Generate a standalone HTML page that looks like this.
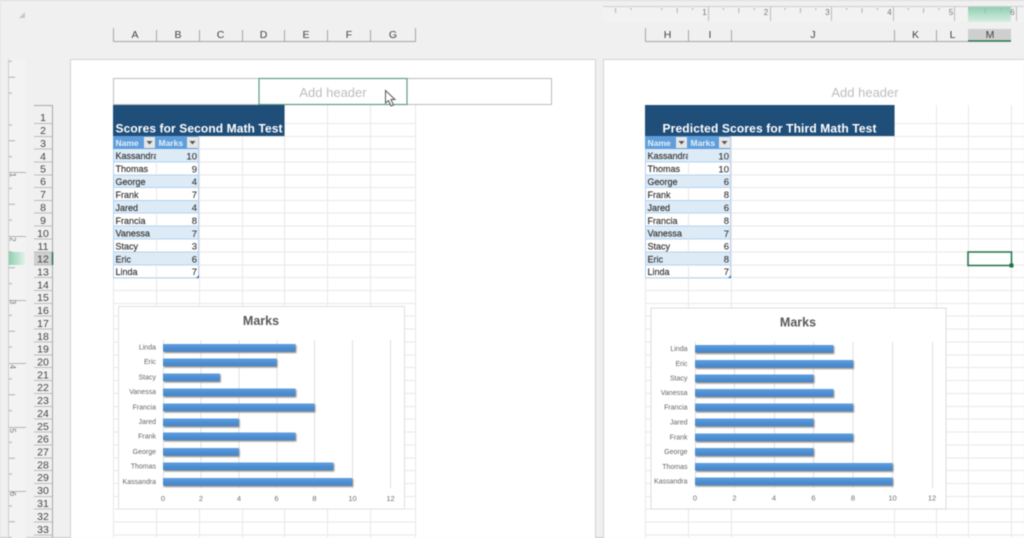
<!DOCTYPE html>
<html><head><meta charset="utf-8"><title>Page Layout</title>
<style>
html,body{margin:0;padding:0;background:#f0f0f0;width:1024px;height:538px;overflow:hidden}
svg{display:block;filter:blur(.5px)}
text{font-family:"Liberation Sans",sans-serif}
.hd{font-size:10.5px;fill:#444;text-anchor:middle}
.rn{font-size:10.5px;fill:#444;text-anchor:middle}
.rl{font-size:8px;fill:#777;text-anchor:middle}
.t{font-size:9px;fill:#2e2e2e;stroke:#2e2e2e;stroke-width:.15px}
.n{font-size:9.5px;fill:#333;text-anchor:end;stroke:#333;stroke-width:.1px}
.th{font-size:8.5px;font-weight:bold;fill:#e4f0fb}
.ti{font-size:12px;font-weight:bold;fill:#fff}
.ah{font-size:13px;fill:#bdbdbd;text-anchor:middle}
.ct{font-size:12.5px;font-weight:bold;fill:#595959;text-anchor:middle}
.ax{font-size:7.5px;fill:#6e6e6e;text-anchor:middle}
.cl{font-size:7px;fill:#666;text-anchor:end}
</style></head><body>
<svg width="1024" height="538" viewBox="0 0 1024 538" xmlns="http://www.w3.org/2000/svg">
<defs>
<linearGradient id="bar" x1="0" y1="0" x2="0" y2="1"><stop offset="0" stop-color="#629fdc"/><stop offset=".5" stop-color="#4d90d5"/><stop offset="1" stop-color="#4585ca"/></linearGradient>
<linearGradient id="gt" x1="0" y1="0" x2="0" y2="1"><stop offset="0" stop-color="#8fd0b0"/><stop offset="1" stop-color="#d8eee2"/></linearGradient>
<linearGradient id="gl" x1="0" y1="0" x2="1" y2="0"><stop offset="0" stop-color="#8fd0b0"/><stop offset="1" stop-color="#e2f2ea"/></linearGradient>
<pattern id="tr" patternUnits="userSpaceOnUse" width="61.6" height="30" x="646.4" y="0">
<path d="M15.4 8v2M30.8 8v5M46.2 8v2" stroke="#b0b0b0" stroke-width="1" fill="none"/>
</pattern>
<pattern id="lr" patternUnits="userSpaceOnUse" width="40" height="63.5" x="0" y="45.5">
<path d="M9 15.900h3M9 31.700h6M9 47.600h3" stroke="#b0b0b0" stroke-width="1" fill="none"/>
</pattern>
<filter id="sh" x="-5%" y="-50%" width="110%" height="200%"><feGaussianBlur stdDeviation=".9"/></filter>
<clipPath id="c1"><rect x="113" y="149" width="43" height="13"/></clipPath>
<clipPath id="c2"><rect x="645" y="149" width="43" height="13"/></clipPath>
</defs>
<rect width="1024" height="538" fill="#f0f0f0"/>
<path d="M0 .5H1024" stroke="#dcdcdc"/>
<path d="M.5 0V538" stroke="#e4e4e4"/>
<path d="M0 537.500H1024" stroke="#c9c9c9"/>

<!-- corner -->
<path d="M25 12v6h-6z" fill="#c8c8c8"/>

<!-- top ruler -->
<rect x="603" y="7" width="421" height="15" fill="#f2f2f2"/>
<rect x="968" y="7" width="43" height="15" fill="url(#gt)"/>
<path d="M603 6.500H1024" stroke="#cfcfcf"/>
<rect x="603" y="7" width="421" height="14" fill="url(#tr)"/>
<path d="M708.500 7v14M770.500 7v14M831.500 7v14M893.500 7v14M954.500 7v14M1016.500 7v14" stroke="#bcbcbc"/>
<text class="rl" x="704.500" y="15">1</text><text class="rl" x="766" y="15">2</text><text class="rl" x="827.500" y="15">3</text><text class="rl" x="889.500" y="15">4</text><text class="rl" x="951" y="15">5</text><text class="rl" x="1012.500" y="15">6</text>

<!-- left ruler -->
<rect x="9" y="59" width="17" height="479" fill="#f3f3f3"/>
<rect x="9" y="252" width="16" height="13" fill="url(#gl)"/>
<path d="M8.500 59V538" stroke="#cdcdcd"/>
<rect x="9" y="59" width="17" height="479" fill="url(#lr)"/>
<path d="M9 172.500h17M9 236.500h17M9 300.500h17M9 363.500h17M9 427.500h17M9 491.500h17" stroke="#b4b4b4"/>
<text class="rl" x="13" y="178" transform="rotate(90 13 175)">1</text><text class="rl" x="13" y="242.300" transform="rotate(90 13 239.300)">2</text><text class="rl" x="13" y="305" transform="rotate(90 13 302)">3</text><text class="rl" x="13" y="369.700" transform="rotate(90 13 366.700)">4</text><text class="rl" x="13" y="433.700" transform="rotate(90 13 430.700)">5</text><text class="rl" x="13" y="497" transform="rotate(90 13 494)">6</text>

<!-- column headers -->
<path d="M113.500 28v13.500H415.500V28M156.500 30v11M199.500 30v11M242.500 30v11M284.500 30v11M327.500 30v11M370.500 30v11" stroke="#a6a6a6" fill="none"/>
<text class="hd" x="135" y="38">A</text><text class="hd" x="178" y="38">B</text><text class="hd" x="220.500" y="38">C</text><text class="hd" x="263.500" y="38">D</text><text class="hd" x="306" y="38">E</text><text class="hd" x="349" y="38">F</text><text class="hd" x="393" y="38">G</text>
<rect x="968" y="29" width="43" height="12" fill="#cfcfcf"/>
<path d="M645.500 28v13.500H968M688.500 30v11M731.500 30v11M894.500 30v11M936.500 30v11" stroke="#a6a6a6" fill="none"/>
<path d="M968 41H1011" stroke="#217346" stroke-width="1.500"/>
<text class="hd" x="667.500" y="38">H</text><text class="hd" x="710" y="38">I</text><text class="hd" x="813" y="38">J</text><text class="hd" x="915.500" y="38">K</text><text class="hd" x="952.500" y="38">L</text><text class="hd" x="990" y="38">M</text>

<!-- row headers -->
<rect x="34" y="252" width="19" height="13" fill="#cfcfcf"/>
<path d="M34 105.500H52.500V538" stroke="#a8a8a8" fill="none"/>
<path d="M52.500 252V265" stroke="#217346" stroke-width="1.500"/>
<path d="M34 123.500h18M34 136.500h18M34 149h18M34 162h18M34 175h18M34 187.500h18M34 200.500h18M34 213h18M34 226h18M34 239h18M34 252h18M34 265h18M34 277.500h18M34 290.500h18M34 303.500h18M34 316h18M34 329h18M34 342h18M34 355h18M34 367.500h18M34 380.500h18M34 393.500h18M34 406.500h18M34 419h18M34 432h18M34 445h18M34 458h18M34 470.500h18M34 483.500h18M34 496.500h18M34 509h18M34 522h18M34 535h18" stroke="#bcbcbc" fill="none"/>
<text class="rn" x="43" y="121">1</text><text class="rn" x="43" y="134">2</text><text class="rn" x="43" y="147">3</text><text class="rn" x="43" y="160">4</text><text class="rn" x="43" y="172.500">5</text><text class="rn" x="43" y="185">6</text><text class="rn" x="43" y="198">7</text><text class="rn" x="43" y="211">8</text><text class="rn" x="43" y="224">9</text><text class="rn" x="43" y="237">10</text><text class="rn" x="43" y="250">11</text><text class="rn" x="43" y="262.500">12</text><text class="rn" x="43" y="275.500">13</text><text class="rn" x="43" y="288.500">14</text><text class="rn" x="43" y="301">15</text><text class="rn" x="43" y="314">16</text><text class="rn" x="43" y="327">17</text><text class="rn" x="43" y="340">18</text><text class="rn" x="43" y="352.500">19</text><text class="rn" x="43" y="365.500">20</text><text class="rn" x="43" y="378.500">21</text><text class="rn" x="43" y="391">22</text><text class="rn" x="43" y="404">23</text><text class="rn" x="43" y="417">24</text><text class="rn" x="43" y="430">25</text><text class="rn" x="43" y="442.500">26</text><text class="rn" x="43" y="455.500">27</text><text class="rn" x="43" y="468.500">28</text><text class="rn" x="43" y="481">29</text><text class="rn" x="43" y="494">30</text><text class="rn" x="43" y="507">31</text><text class="rn" x="43" y="520">32</text><text class="rn" x="43" y="533">33</text>

<!-- pages -->
<rect x="71" y="59" width="524" height="479" fill="#fff"/>
<path d="M70.500 538V59.500H595.500V538" stroke="#d2d2d2" fill="none"/>
<rect x="603" y="59" width="421" height="479" fill="#fff"/>
<path d="M603.500 538V59.500H1024" stroke="#d2d2d2" fill="none"/>

<!-- grid left -->
<path d="M113 123.500H415M113 136.500H415M113 149H415M113 162H415M113 175H415M113 187.500H415M113 200.500H415M113 213H415M113 226H415M113 239H415M113 252H415M113 265H415M113 277.500H415M113 290.500H415M113 303.500H415M113 316H415M113 329H415M113 342H415M113 355H415M113 367.500H415M113 380.500H415M113 393.500H415M113 406.500H415M113 419H415M113 432H415M113 445H415M113 458H415M113 470.500H415M113 483.500H415M113 496.500H415M113 509H415M113 522H415M113 535H415M113.500 105V538M156.500 105V538M199.500 105V538M242.500 105V538M284.500 105V538M327.500 105V538M370.500 105V538M415.500 105V538" stroke="#e8e8e8" fill="none"/>
<!-- grid right -->
<path d="M645 123.500H1024M645 136.500H1024M645 149H1024M645 162H1024M645 175H1024M645 187.500H1024M645 200.500H1024M645 213H1024M645 226H1024M645 239H1024M645 252H1024M645 265H1024M645 277.500H1024M645 290.500H1024M645 303.500H1024M645 316H1024M645 329H1024M645 342H1024M645 355H1024M645 367.500H1024M645 380.500H1024M645 393.500H1024M645 406.500H1024M645 419H1024M645 432H1024M645 445H1024M645 458H1024M645 470.500H1024M645 483.500H1024M645 496.500H1024M645 509H1024M645 522H1024M645 535H1024M645.500 105V538M688.500 105V538M731.500 105V538M894.500 105V538M936.500 105V538M968.500 105V538M1011.500 105V538" stroke="#e8e8e8" fill="none"/>

<!-- header boxes -->
<rect x="113.500" y="78.500" width="438" height="26" fill="#fff" stroke="#bdbdbd"/>
<rect x="259" y="78.500" width="148" height="26" fill="#fff" stroke="#5f9e7f" stroke-width="1.200"/>
<text class="ah" x="333" y="97">Add header</text>
<text class="ah" x="865" y="97">Add header</text>
<path d="M385.500 90.500V103L388.500 100.500L391 106L393.500 105L391 99.500H395Z" fill="#fff" stroke="#555" stroke-width="1"/>

<!-- left table -->
<rect x="113" y="105" width="171.500" height="31" fill="#1f4e79"/>
<text class="ti" x="115.500" y="132.500" textLength="167" lengthAdjust="spacing">Scores for Second Math Test</text>
<rect x="113" y="136" width="86" height="13" fill="#5f9eda"/>
<text class="th" x="115.500" y="146">Name</text><text class="th" x="158.500" y="146">Marks</text>
<rect x="144" y="137" width="11" height="11" fill="#e6e6e6"/><path d="M146.500 141h6l-3 3.500z" fill="#555"/>
<rect x="187" y="137" width="11" height="11" fill="#e6e6e6"/><path d="M189.500 141h6l-3 3.500z" fill="#555"/>
<path d="M113 149h86v13h-86zM113 175h86v12.500h-86zM113 200.500h86v12.500h-86zM113 226h86v13h-86zM113 252h86v13h-86z" fill="#ddebf7"/>
<path d="M113 162H199M113 175H199M113 187.500H199M113 200.500H199M113 213H199M113 226H199M113 239H199M113 252H199M113 265H199M113 278H199M113.500 149V278M198.500 136V278" stroke="#b4d2ee" fill="none"/>
<path d="M156.500 149V162" stroke="#ddebf7"/><path d="M156.500 162V175M156.500 187.500V200.500M156.500 213V226M156.500 239V252M156.500 265V278" stroke="#e8e8e8"/>
<g clip-path="url(#c1)"><text class="t" x="115.500" y="159">Kassandra</text></g>
<text class="t" x="115.500" y="172">Thomas</text><text class="t" x="115.500" y="185">George</text><text class="t" x="115.500" y="198">Frank</text><text class="t" x="115.500" y="211">Jared</text><text class="t" x="115.500" y="224">Francia</text><text class="t" x="115.500" y="236.500">Vanessa</text><text class="t" x="115.500" y="249.500">Stacy</text><text class="t" x="115.500" y="262.500">Eric</text><text class="t" x="115.500" y="275">Linda</text>
<text class="n" x="197" y="159.500">10</text><text class="n" x="197" y="172.500">9</text><text class="n" x="197" y="185">4</text><text class="n" x="197" y="198">7</text><text class="n" x="197" y="211">4</text><text class="n" x="197" y="224">8</text><text class="n" x="197" y="237">7</text><text class="n" x="197" y="249.500">3</text><text class="n" x="197" y="262.500">6</text><text class="n" x="197" y="275">7</text>
<path d="M199 275v3h-3z" fill="#3b6db5"/>

<!-- right table -->
<rect x="645" y="105" width="249.500" height="31" fill="#1f4e79"/>
<text class="ti" x="662.500" y="132.500" textLength="214" lengthAdjust="spacing">Predicted Scores for Third Math Test</text>
<rect x="645" y="136" width="86" height="13" fill="#5f9eda"/>
<text class="th" x="647.500" y="146">Name</text><text class="th" x="690.500" y="146">Marks</text>
<rect x="676" y="137" width="11" height="11" fill="#e6e6e6"/><path d="M678.500 141h6l-3 3.500z" fill="#555"/>
<rect x="719" y="137" width="11" height="11" fill="#e6e6e6"/><path d="M721.500 141h6l-3 3.500z" fill="#555"/>
<path d="M645 149h86v13h-86zM645 175h86v12.500h-86zM645 200.500h86v12.500h-86zM645 226h86v13h-86zM645 252h86v13h-86z" fill="#ddebf7"/>
<path d="M645 162H731M645 175H731M645 187.500H731M645 200.500H731M645 213H731M645 226H731M645 239H731M645 252H731M645 265H731M645 278H731M645.500 149V278M730.500 136V278" stroke="#b4d2ee" fill="none"/>
<path d="M688.500 149V162" stroke="#ddebf7"/><path d="M688.500 162V175M688.500 187.500V200.500M688.500 213V226M688.500 239V252M688.500 265V278" stroke="#e8e8e8"/>
<g clip-path="url(#c2)"><text class="t" x="647.500" y="159">Kassandra</text></g>
<text class="t" x="647.500" y="172">Thomas</text><text class="t" x="647.500" y="185">George</text><text class="t" x="647.500" y="198">Frank</text><text class="t" x="647.500" y="211">Jared</text><text class="t" x="647.500" y="224">Francia</text><text class="t" x="647.500" y="236.500">Vanessa</text><text class="t" x="647.500" y="249.500">Stacy</text><text class="t" x="647.500" y="262.500">Eric</text><text class="t" x="647.500" y="275">Linda</text>
<text class="n" x="729" y="159.500">10</text><text class="n" x="729" y="172.500">10</text><text class="n" x="729" y="185">6</text><text class="n" x="729" y="198">8</text><text class="n" x="729" y="211">6</text><text class="n" x="729" y="224">8</text><text class="n" x="729" y="237">7</text><text class="n" x="729" y="249.500">6</text><text class="n" x="729" y="262.500">8</text><text class="n" x="729" y="275">7</text>
<path d="M731 275v3h-3z" fill="#3b6db5"/>

<!-- selected cell -->
<rect x="968" y="252" width="43.500" height="13.500" fill="none" stroke="#217346" stroke-width="1.500"/>
<rect x="1009.500" y="263.500" width="4" height="4" fill="#217346"/>

<!-- left chart -->
<rect x="118.500" y="306.500" width="286" height="202.500" fill="#fff" stroke="#e0e0e0"/>
<text class="ct" x="261" y="325">Marks</text>
<path d="M163.500 340V488M201 340V488M239 340V488M277 340V488M314.500 340V488M352.500 340V488M390.500 340V488" stroke="#e0e0e0"/>
<g fill="#8a8a8a" filter="url(#sh)">
<rect x="164" y="345" width="132.400" height="8"/><rect x="164" y="359.500" width="113.500" height="8"/><rect x="164" y="374.500" width="56.800" height="8"/><rect x="164" y="389.500" width="132.400" height="8"/><rect x="164" y="404.500" width="151.400" height="8"/><rect x="164" y="419.500" width="75.700" height="8"/><rect x="164" y="433.500" width="132.400" height="8"/><rect x="164" y="449" width="75.700" height="8"/><rect x="164" y="463.500" width="170.300" height="8"/><rect x="164" y="479" width="189.200" height="8"/>
</g>
<g fill="url(#bar)">
<rect x="163" y="344" width="132.400" height="7.500"/><rect x="163" y="358.500" width="113.500" height="7.500"/><rect x="163" y="373.500" width="56.800" height="7.500"/><rect x="163" y="388.500" width="132.400" height="7.500"/><rect x="163" y="403.500" width="151.400" height="7.500"/><rect x="163" y="418.500" width="75.700" height="7.500"/><rect x="163" y="432.500" width="132.400" height="7.500"/><rect x="163" y="448" width="75.700" height="7.500"/><rect x="163" y="462.500" width="170.300" height="7.500"/><rect x="163" y="478" width="189.200" height="7.500"/>
</g>
<text class="cl" x="156" y="349.500">Linda</text><text class="cl" x="156" y="364">Eric</text><text class="cl" x="156" y="379.500">Stacy</text><text class="cl" x="156" y="394">Vanessa</text><text class="cl" x="156" y="409.500">Francia</text><text class="cl" x="156" y="424">Jared</text><text class="cl" x="156" y="438.500">Frank</text><text class="cl" x="156" y="454">George</text><text class="cl" x="156" y="468.500">Thomas</text><text class="cl" x="156" y="484">Kassandra</text>
<text class="ax" x="163" y="501">0</text><text class="ax" x="201" y="501">2</text><text class="ax" x="239" y="501">4</text><text class="ax" x="276.500" y="501">6</text><text class="ax" x="314.500" y="501">8</text><text class="ax" x="352.500" y="501">10</text><text class="ax" x="390.500" y="501">12</text>

<!-- right chart -->
<rect x="651" y="308" width="295" height="201" fill="#fff" stroke="#dcdcdc"/>
<text class="ct" x="798" y="326.500">Marks</text>
<path d="M695.500 342V488M734.500 342V488M774.500 342V488M813.500 342V488M853 342V488M892.500 342V488M932.500 342V488" stroke="#e0e0e0"/>
<g fill="#8a8a8a" filter="url(#sh)">
<rect x="696" y="346" width="138.300" height="8"/><rect x="696" y="361" width="158" height="8"/><rect x="696" y="375.500" width="118.500" height="8"/><rect x="696" y="390" width="138.300" height="8"/><rect x="696" y="404.500" width="158" height="8"/><rect x="696" y="419.500" width="118.500" height="8"/><rect x="696" y="434.500" width="158" height="8"/><rect x="696" y="449" width="118.500" height="8"/><rect x="696" y="464" width="197.500" height="8"/><rect x="696" y="478.500" width="197.500" height="8"/>
</g>
<g fill="url(#bar)">
<rect x="695" y="345" width="138.300" height="7.500"/><rect x="695" y="360" width="158" height="7.500"/><rect x="695" y="374.500" width="118.500" height="7.500"/><rect x="695" y="389" width="138.300" height="7.500"/><rect x="695" y="403.500" width="158" height="7.500"/><rect x="695" y="418.500" width="118.500" height="7.500"/><rect x="695" y="433.500" width="158" height="7.500"/><rect x="695" y="448" width="118.500" height="7.500"/><rect x="695" y="463" width="197.500" height="7.500"/><rect x="695" y="477.500" width="197.500" height="7.500"/>
</g>
<text class="cl" x="687.500" y="351">Linda</text><text class="cl" x="687.500" y="366">Eric</text><text class="cl" x="687.500" y="380.500">Stacy</text><text class="cl" x="687.500" y="395">Vanessa</text><text class="cl" x="687.500" y="409.500">Francia</text><text class="cl" x="687.500" y="424.500">Jared</text><text class="cl" x="687.500" y="439.500">Frank</text><text class="cl" x="687.500" y="454">George</text><text class="cl" x="687.500" y="469">Thomas</text><text class="cl" x="687.500" y="483.500">Kassandra</text>
<text class="ax" x="695" y="500.500">0</text><text class="ax" x="734.500" y="500.500">2</text><text class="ax" x="774" y="500.500">4</text><text class="ax" x="813.500" y="500.500">6</text><text class="ax" x="853" y="500.500">8</text><text class="ax" x="892.500" y="500.500">10</text><text class="ax" x="932" y="500.500">12</text>
</svg>
</body></html>
